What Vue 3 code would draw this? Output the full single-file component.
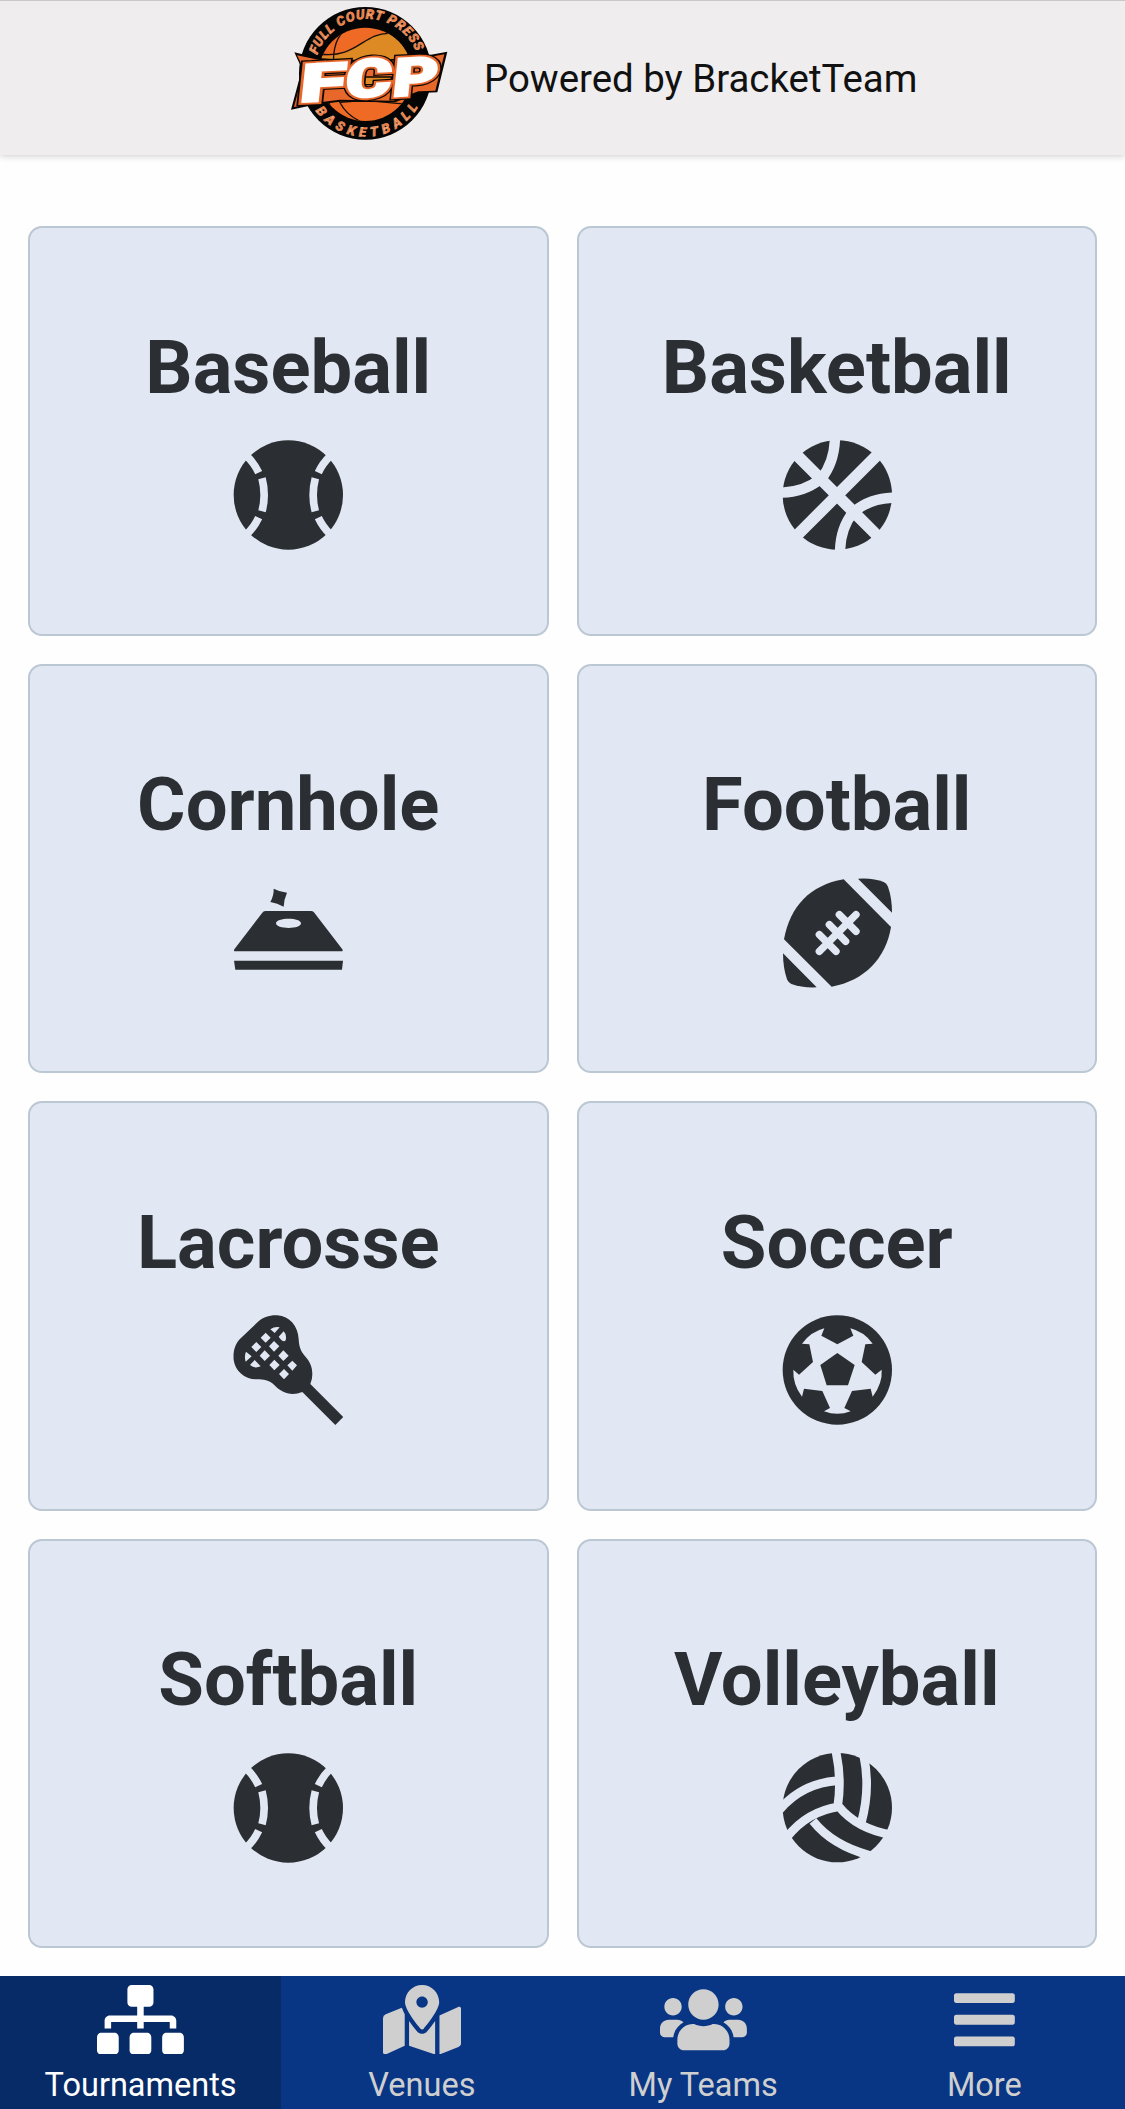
<script setup>
const sports = [
  { name: 'Baseball', icon: 'ball', box: '68 59 330 330' },
  { name: 'Basketball', icon: 'basketball', box: '67 59 330 330' },
  { name: 'Cornhole', icon: 'cornhole', box: '69 22 330 330' },
  { name: 'Football', icon: 'football', box: '66 52 330 330' },
  { name: 'Lacrosse', icon: 'lacrosse', box: '68 44 330 330' },
  { name: 'Soccer', icon: 'soccer', box: '67 44 330 330' },
  { name: 'Softball', icon: 'ball', box: '68 59 330 330' },
  { name: 'Volleyball', icon: 'volleyball', box: '67 53 330 330' },
]

const markLayers = ['mark-shadow', 'mark-edge', 'mark-face']
const markLetters = [
  { letter: 'F', x: 2, y: 2, width: 136 },
  { letter: 'C', x: 138, y: -4, width: 138 },
  { letter: 'P', x: 280, y: -1, width: 136 },
]

const tabs = [
  {
    name: 'Tournaments',
    active: true,
    width: 640,
    path: 'M128 352H32c-17.67 0-32 14.33-32 32v96c0 17.67 14.33 32 32 32h96c17.67 0 32-14.33 32-32v-96c0-17.67-14.33-32-32-32zm-24-80h192v48h48v-48h192v48h48v-57.59c0-21.17-17.23-38.41-38.41-38.41H344v-64h40c17.67 0 32-14.33 32-32V32c0-17.67-14.33-32-32-32H256c-17.67 0-32 14.33-32 32v96c0 17.67 14.33 32 32 32h40v64H94.41C73.23 224 56 241.23 56 262.41V320h48v-48zm264 80h-96c-17.67 0-32 14.33-32 32v96c0 17.67 14.33 32 32 32h96c17.67 0 32-14.33 32-32v-96c0-17.67-14.33-32-32-32zm240 0h-96c-17.67 0-32 14.33-32 32v96c0 17.67 14.33 32 32 32h96c17.67 0 32-14.33 32-32v-96c0-17.67-14.33-32-32-32z',
  },
  {
    name: 'Venues',
    width: 576,
    path: 'M288 0c-69.59 0-126 56.41-126 126 0 56.26 82.35 158.8 113.9 196.02 6.39 7.54 17.82 7.54 24.2 0C331.65 284.8 414 182.26 414 126 414 56.41 357.59 0 288 0zm0 168c-23.2 0-42-18.8-42-42s18.8-42 42-42 42 18.8 42 42-18.8 42-42 42zM20.12 215.95A32.006 32.006 0 0 0 0 245.66v250.32c0 11.32 11.43 19.06 21.94 14.86L160 448V214.92c-8.84-15.98-16.07-31.54-21.25-46.42L20.12 215.95zM288 359.67c-14.07 0-27.38-6.18-36.51-16.96-19.66-23.2-40.57-49.62-59.49-76.72v182l192 64V266c-18.92 27.09-39.82 53.52-59.49 76.72-9.13 10.77-22.44 16.95-36.51 16.95zm266.06-198.51L416 224v288l139.88-55.95A31.996 31.996 0 0 0 576 426.34V176.02c0-11.32-11.43-19.06-21.94-14.86z',
  },
  {
    name: 'My Teams',
    width: 640,
    path: 'M96 224c35.3 0 64-28.7 64-64s-28.7-64-64-64-64 28.7-64 64 28.7 64 64 64zm448 0c35.3 0 64-28.7 64-64s-28.7-64-64-64-64 28.7-64 64 28.7 64 64 64zm32 32h-64c-17.6 0-33.5 7.1-45.1 18.6 40.3 22.1 68.9 62 75.1 109.4h66c17.7 0 32-14.3 32-32v-32c0-35.3-28.7-64-64-64zm-256 0c61.9 0 112-50.1 112-112S381.9 32 320 32 208 82.1 208 144s50.1 112 112 112zm76.8 32h-8.3c-20.8 10-43.9 16-68.5 16s-47.6-6-68.5-16h-8.3C179.6 288 128 339.6 128 403.2V432c0 26.5 21.5 48 48 48h288c26.5 0 48-21.5 48-48v-28.8c0-63.6-51.6-115.2-115.2-115.2zm-223.7-13.4C161.5 263.1 145.6 256 128 256H64c-35.3 0-64 28.7-64 64v32c0 17.7 14.3 32 32 32h65.9c6.3-47.4 34.9-87.3 75.2-109.4z',
  },
  {
    name: 'More',
    width: 448,
    path: 'M16 132h416c8.837 0 16-7.163 16-16V76c0-8.837-7.163-16-16-16H16C7.163 60 0 67.163 0 76v40c0 8.837 7.163 16 16 16zm0 160h416c8.837 0 16-7.163 16-16v-40c0-8.837-7.163-16-16-16H16c-8.837 0-16 7.163-16 16v40c0 8.837 7.163 16 16 16zm0 160h416c8.837 0 16-7.163 16-16v-40c0-8.837-7.163-16-16-16H16c-8.837 0-16 7.163-16 16v40c0 8.837 7.163 16 16 16z',
  },
]
</script>

<template>
  <div class="app">
    <header class="header">
      <svg class="logo" viewBox="30 10 480 410">
        <defs>
          <path id="arc-top" d="M112 163 A158 158 0 0 1 412 163" />
          <path id="arc-bottom" d="M106 330 A183 183 0 0 0 420 307" />
          <clipPath id="ball-clip"><circle cx="256" cy="221" r="140" /></clipPath>
        </defs>
        <circle cx="256" cy="218" r="199" fill="#050505" />
        <circle cx="256" cy="221" r="140" fill="#ee6a25" />
        <g clip-path="url(#ball-clip)">
          <path d="M120 165C230 175 250 95 325 98Q385 125 400 190V260H120Z" fill="#de8a24" />
          <g fill="none" stroke="#14100c" stroke-width="4">
            <path d="M120 160C230 175 250 95 330 98M192 90C160 120 160 165 160 200C160 290 185 335 240 362M130 250C148 290 150 310 150 330M180 305Q260 298 320 305T400 310" />
          </g>
        </g>
        <path d="M43 155L115 172Q270 185 420 168L502 153L472 275L420 277L345 305L180 303L100 313L33 327L66 205Z" fill="#0b0705" />
        <path d="M51 164L118 178Q270 188 420 174L493 161L466 270L415 272L340 300L180 297L95 308L42 319L72 205Z" fill="#e8672a" />
        <path d="M256 229H335L330 252H252Z" fill="#de8a24" stroke="#0b0705" stroke-width="4" />
        <g class="logo-mark" transform="translate(54 303) rotate(-3) skewX(-9)">
          <g v-for="layer in markLayers" :key="layer" :class="layer">
            <text
              v-for="m in markLetters"
              :key="m.letter"
              :x="m.x"
              :y="m.y"
              :textLength="m.width"
              lengthAdjust="spacingAndGlyphs"
            >{{ m.letter }}</text>
          </g>
        </g>
        <text class="ring"><textPath href="#arc-top" textLength="384">FULL COURT PRESS</textPath></text>
        <text class="ring"><textPath href="#arc-bottom" textLength="366">BASKETBALL</textPath></text>
      </svg>
      <span class="powered">Powered by BracketTeam</span>
    </header>

    <main class="grid">
      <section v-for="sport in sports" :key="sport.name" class="card">
        <h2 class="title">{{ sport.name }}</h2>
        <svg class="icon" :viewBox="sport.box">
          <g v-if="sport.icon === 'ball'">
            <circle cx="234" cy="224" r="164" />
            <g class="cut" stroke-width="23">
              <path d="M110 108Q132 129 145 157M145 292Q132 320 110 341" />
              <path d="M155 174Q168 224 155 273" />
              <path d="M359 108Q337 129 324 157M324 292Q337 320 359 341" />
              <path d="M315 174Q302 224 315 273" />
            </g>
          </g>
          <g v-else-if="sport.icon === 'basketball'">
            <circle cx="233" cy="224" r="164" />
            <g class="cut">
              <path stroke-width="35" d="M107 100L357 350M357 100L107 350" />
              <path stroke-width="31" d="M226 50Q225 125 185 175M60 217Q130 217 180 178M406 232Q335 232 286 272M241 398Q241 325 281 275" />
            </g>
          </g>
          <g v-else-if="sport.icon === 'cornhole'">
            <path d="M191 54Q210 64 231 66Q222 86 221 108Q202 97 181 94Q192 74 191 54Z" />
            <path fill-rule="evenodd" d="M166 121H304Q310 121 313 126L397 236Q400 242 394 242H76Q70 242 73 236L157 126Q160 121 166 121ZM236 144C216 144 198 149 198 158S216 172 236 172S273 167 273 158S256 144 236 144Z" />
            <path d="M72 270H399L396 297H76Z" />
          </g>
          <g v-else-if="sport.icon === 'football'">
            <path d="M251 56L393 199C378 292 314 360 215 378L72 236C90 137 151 73 251 56Z" />
            <path d="M294 54Q340 51 371 64Q380 68 384 78Q396 112 396 156Z" />
            <path d="M69 278L170 380Q127 382 94 370Q85 366 81 356Q69 322 69 278Z" />
            <path class="cut lace" stroke-width="22" d="M178 272L288 162M178 222L228 272M208 192L257 242M238 162L288 212" />
          </g>
          <g v-else-if="sport.icon === 'lacrosse'">
            <path d="M88 117L139 68C158 49 179 44 201 45C238 48 263 77 265 116C266 137 270 151 283 166C299 184 306 199 306 222Q306 238 300 251L399 350L375 374L276 275C240 289 213 275 194 256C175 238 160 237 139 237C103 238 74 211 70 179C68 154 73 134 88 117Z" />
            <g class="hole">
              <path d="M180 87Q194 77 208 81L193 98ZM107 154L124 168L106 184Q101 168 107 154ZM220 93Q230 103 226 120Q219 129 205 109ZM133 179L151 198Q133 206 119 194Z" />
              <path d="M166 97L181 112L166 127L151 112ZM138 125L153 140L138 155L123 140ZM191 122L207 138L191 154L176 138ZM163 150L179 166L163 182L148 166ZM219 150L235 166L219 182L204 166ZM192 178L208 194L192 210L177 194ZM246 181L260 195L246 211L231 195ZM221 206L236 221L221 237L206 221Z" />
            </g>
          </g>
          <g v-else-if="sport.icon === 'soccer'">
            <circle cx="233" cy="209" r="164" />
            <path class="hole" d="M127 130Q154 94 194 84L185 106L233 132L281 106L272 84Q313 94 339 130L317 132L306 185L347 223L366 208Q369 249 339 289L333 265L277 272L254 323L273 333Q233 348 193 333L211 323L188 272L133 265L127 289Q99 252 101 208L118 223L160 185L149 132Z" />
            <path d="M233 158L285 194L265 255H201L182 194Z" />
          </g>
          <g v-else>
            <circle cx="233" cy="217" r="164" />
            <g class="cut" stroke-width="26">
              <path d="M228 45Q247 130 234 214M60 223Q128 143 236 136M83 304Q143 228 238 214Q294 282 400 299M160 257Q218 330 330 360M312 60Q333 160 305 262" />
            </g>
          </g>
        </svg>
      </section>
    </main>

    <nav class="tabs">
      <a v-for="tab in tabs" :key="tab.name" class="tab" :class="{ active: tab.active }">
        <svg class="tab-icon" :viewBox="`0 0 ${tab.width} 512`"><path :d="tab.path" /></svg>
        <span class="label">{{ tab.name }}</span>
      </a>
    </nav>
  </div>
</template>

<style>
body {
  margin: 0;
  background: #fefefe;
}
</style>

<style scoped>
.app {
  display: flex;
  flex-direction: column;
  width: 1125px;
  height: 2109px;
  box-sizing: border-box;
  font-family: Roboto, 'Liberation Sans', sans-serif;
  overflow: hidden;
}
.header {
  display: flex;
  align-items: center;
  gap: 34px;
  flex: none;
  height: 155px;
  box-sizing: border-box;
  border-top: 1px solid #c9c8c9;
  padding: 0 0 12px 290px;
  background: #efedee;
  box-shadow: 0 1px 7px rgba(0, 0, 0, 0.2);
}
.logo {
  display: block;
  width: 160px;
  height: 136.7px;
}
.logo-mark text {
  font-family: Roboto, sans-serif;
  font-weight: 900;
  font-size: 158px;
  stroke-linejoin: miter;
}
.logo-mark .mark-shadow {
  fill: #0b0705;
  stroke: #0b0705;
  stroke-width: 24px;
}
.logo-mark .mark-edge {
  fill: #e8672a;
  stroke: #e8672a;
  stroke-width: 17px;
}
.logo-mark .mark-face {
  fill: #fff;
  stroke: #fff;
  stroke-width: 6px;
}
.ring {
  font-family: Roboto, sans-serif;
  font-style: italic;
  font-weight: 900;
  font-size: 40px;
  fill: #ef7a3c;
  stroke: #f6c3a4;
  stroke-width: 1px;
}
.powered {
  font-size: 38.4px;
  line-height: 46px;
  padding-top: 14px;
  color: #111;
  white-space: nowrap;
}
.grid {
  display: grid;
  grid-template-columns: 1fr 1fr;
  grid-auto-rows: 409.5px;
  gap: 28px;
  flex: 1;
  padding: 71px 28px 0;
}
.card {
  display: flex;
  flex-direction: column;
  align-items: center;
  gap: 32.5px;
  box-sizing: border-box;
  padding-top: 99.5px;
  border: 2px solid #bbc7d3;
  border-radius: 14px;
  background: #e2e8f3;
}
.title {
  margin: 0;
  font-size: 74.2px;
  line-height: 80px;
  font-weight: 700;
  color: #2b2f34;
}
.icon {
  display: block;
  width: 110px;
  height: 110px;
  fill: #2b2f33;
}
.cut {
  fill: none;
  stroke: #e2e8f3;
}
.lace {
  stroke-linecap: round;
}
.hole {
  fill: #e2e8f3;
}
.tabs {
  display: flex;
  flex: none;
  height: 133px;
  background: #083684;
}
.tab {
  display: flex;
  flex: 1;
  flex-direction: column;
  align-items: center;
  gap: 12px;
  padding-top: 8.5px;
  color: #cfcfd0;
}
.tab.active {
  background: #072b67;
  color: #fff;
}
.tab-icon {
  display: block;
  height: 69.5px;
  fill: currentColor;
}
.label {
  font-size: 32.5px;
  line-height: 38px;
}
</style>
